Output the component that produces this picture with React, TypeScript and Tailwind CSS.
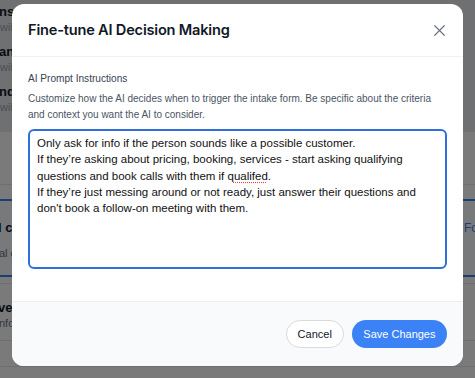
import { X } from "lucide-react";

const bgRows = [
  { title: "nst", sub: "will" },
  { title: "ank", sub: "will" },
  { title: "nd", sub: "will" },
];

const App = () => {
  return (
    <div className="relative h-[378px] w-[475px] overflow-hidden bg-white font-['Liberation_Sans',Arial,sans-serif]">
      {/* Page behind the dialog */}
      <div className="flex flex-col text-[11px]">
        <div className="flex h-[132px] flex-col bg-[#e9eaec] pt-[4px]">
          {bgRows.map((row, i) => (
            <div key={i} className="flex h-[40px] flex-col">
              <span className="-ml-[1px] h-[16px] text-[13px] font-semibold leading-[16px] text-[#111827]">{row.title}</span>
              <span className="h-[14px] leading-[14px] text-[#9ca3af]">{row.sub}</span>
            </div>
          ))}
        </div>
        <div className="h-[52px]" />
        <div className="h-[15px] border-t border-[#e5e7eb]" />
        <div className="flex h-[78px] flex-col border-y-2 border-[#3b82f6] bg-[#fbfcff] pt-[19px]">
          <div className="flex justify-between">
            <span className="-ml-[2px] text-[13px] font-semibold leading-[16px] text-[#111827]">l c</span>
            <span className="-mr-[17px] text-[12px] leading-[16px] text-[#3b82f6]">s Form</span>
          </div>
          <span className="-ml-[1px] mt-[10px] text-[11px] leading-[14px] text-[#6b7280]">al c</span>
        </div>
        <div className="h-[6px]" />
        <div className="flex h-[57px] flex-col border-t border-[#e5e7eb] pt-[16px]">
          <span className="-ml-[2px] text-[13px] font-semibold leading-[16px] text-[#111827]">ve</span>
          <span className="-ml-[1px] text-[11px] leading-[14px] text-[#6b7280]">nfo</span>
        </div>
        <div className="h-[26px] border-t border-[#e5e7eb]" />
        <div className="h-[20px] border-t border-[#e5e7eb]" />
      </div>

      {/* Overlay */}
      <div className="absolute inset-0 bg-black/[0.52]" />

      {/* Dialog */}
      <div className="absolute left-[12px] top-[4px] flex h-[362px] w-[451px] flex-col overflow-hidden rounded-[12px] bg-white">
        <div className="flex h-[53px] items-center justify-between border-b border-[#f0f1f3] pl-[16px] pr-[14px]">
          <h2 className="font-['Inter',sans-serif] text-[14.6px] font-semibold leading-[20px] tracking-[-0.2px] text-[#111827]">
            Fine-tune AI Decision Making
          </h2>
          <button className="text-[#6b7280]">
            <X size={19} strokeWidth={1.5} />
          </button>
        </div>

        <div className="flex flex-col px-[16px] pt-[15px] pb-[32px]">
          <label className="text-[10.1px] leading-[14px] text-[#374151]">AI Prompt Instructions</label>
          <p className="mt-[5px] text-[10px] leading-[16px] text-[#4b5563]">
            Customize how the AI decides when to trigger the intake form. Be specific about the criteria and context you want the AI to consider.
          </p>
          <div
            role="textbox"
            className="mt-[6px] h-[140px] whitespace-pre-wrap rounded-[6px] border-2 border-[#2f6fdc] px-[7px] pt-[4px] text-[11.5px] leading-[16.25px] text-[#111111]"
          >
            Only ask for info if the person sounds like a possible customer.
            {"\n"}
            If they&rsquo;re asking about pricing, booking, services - start asking qualifying questions and book calls with them if q
            <span className="underline decoration-[#ef4444] decoration-dotted underline-offset-2">ualifed</span>.
            {"\n"}
            If they&rsquo;re just messing around or not ready, just answer their questions and don't book a follow-on meeting with them.
          </div>
        </div>

        <div className="flex flex-1 items-center justify-end gap-[8px] border-t border-[#eceef1] bg-[#f9fafb] px-[16px]">
          <button className="h-[28px] rounded-full border border-[#d9dbe0] bg-white px-[11px] text-[11px] text-[#111827]">
            Cancel
          </button>
          <button className="h-[28px] rounded-full bg-[#3b82f6] px-[11.5px] text-[11px] text-white">
            Save Changes
          </button>
        </div>
      </div>
    </div>
  );
};

export default App;
